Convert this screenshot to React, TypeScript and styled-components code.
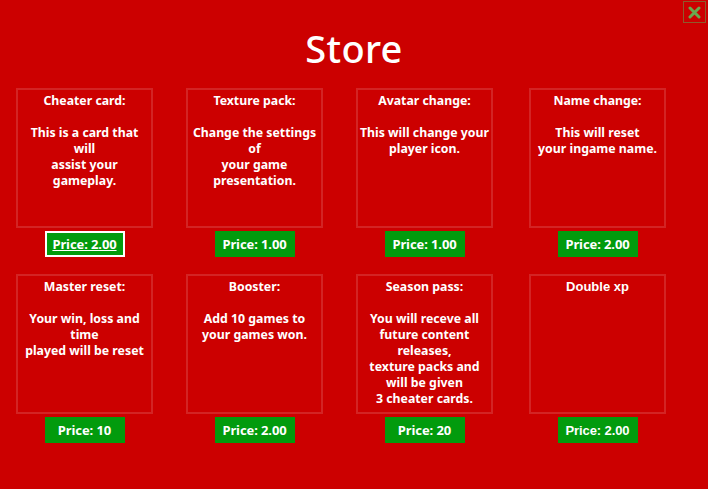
import React from "react";
import styled, { createGlobalStyle } from "styled-components";

type Item = {
  name: string;
  lines: string[];
  price: string;
  fallback?: boolean;
  active?: boolean;
};

const items: Item[] = [
  { name: "Cheater card:", lines: ["This is a card that", "will", "assist your", "gameplay."], price: "2.00", active: true },
  { name: "Texture pack:", lines: ["Change the settings", "of", "your game", "presentation."], price: "1.00" },
  { name: "Avatar change:", lines: ["This will change your", "player icon."], price: "1.00" },
  { name: "Name change:", lines: ["This will reset", "your ingame name."], price: "2.00" },
  { name: "Master reset:", lines: ["Your win, loss and", "time", "played will be reset"], price: "10" },
  { name: "Booster:", lines: ["Add 10 games to", "your games won."], price: "2.00" },
  {
    name: "Season pass:",
    lines: ["You will receve all", "future content", "releases,", "texture packs and", "will be given", "3 cheater cards."],
    price: "20",
  },
  { name: "Double xp", lines: [], price: "2.00", fallback: true },
];

const GlobalStyle = createGlobalStyle`
  html, body {
    margin: 0;
    background: #cc0000;
  }
  body {
    font-family: "Noto Sans", "DejaVu Sans", sans-serif;
  }
`;

const Page = styled.div`
  position: relative;
  width: 708px;
  height: 489px;
  background: #cc0000;
  color: #fff;
  overflow: hidden;
`;

const Title = styled.h1`
  margin: 0;
  padding-top: 26px;
  height: 63px;
  box-sizing: border-box;
  text-align: center;
  font-size: 38px;
  line-height: 44px;
  font-weight: 500;
  letter-spacing: 0.3px;
`;

const CloseButton = styled.button`
  position: absolute;
  top: 1px;
  right: 2px;
  width: 23px;
  height: 22px;
  padding: 0;
  border: 1px solid #8f5a2c;
  background: transparent;
  display: flex;
  align-items: center;
  justify-content: center;
  cursor: pointer;
`;

const Grid = styled.div`
  display: grid;
  grid-template-columns: 170px 170px 173px 137px;
  row-gap: 17px;
  padding: 25px 0 0 16px;
`;

const Slot = styled.div`
  display: flex;
  flex-direction: column;
  align-items: center;
  width: 137px;
`;

const Card = styled.div<{ $fallback?: boolean }>`
  box-sizing: border-box;
  width: 137px;
  height: 140px;
  border: 2px solid rgba(255, 255, 255, 0.14);
  padding-top: 3px;
  text-align: center;
  white-space: nowrap;
  font-family: ${({ $fallback }) =>
    $fallback ? `"Liberation Sans", Arial, sans-serif` : `"Noto Sans", "DejaVu Sans", sans-serif`};
  font-size: ${({ $fallback }) => ($fallback ? "13px" : "12.3px")};
  font-weight: 700;
  line-height: 16px;
`;

const Gap = styled.div`
  height: 16px;
`;

const PriceButton = styled.button<{ $active?: boolean; $fallback?: boolean }>`
  box-sizing: border-box;
  margin-top: 3px;
  width: 80px;
  height: 26px;
  padding: 0;
  background: #029b0d;
  color: #fff;
  border: ${({ $active }) => ($active ? "2px solid #fff" : "none")};
  font-family: ${({ $fallback }) =>
    $fallback ? `"Liberation Sans", Arial, sans-serif` : `"Noto Sans", "DejaVu Sans", sans-serif`};
  font-size: 13px;
  font-weight: 700;
  letter-spacing: -0.1px;
  text-decoration: ${({ $active }) => ($active ? "underline" : "none")};
  cursor: pointer;
`;

export default function App() {
  return (
    <Page>
      <GlobalStyle />
      <Title>Store</Title>
      <CloseButton aria-label="close">
        <svg width="13" height="13" viewBox="0 0 13 13">
          <path d="M2 2 L11 11 M11 2 L2 11" stroke="#6aa84f" strokeWidth="3" strokeLinecap="round" />
        </svg>
      </CloseButton>
      <Grid>
        {items.map((item) => (
          <Slot key={item.name}>
            <Card $fallback={item.fallback}>
              <div>{item.name}</div>
              {item.lines.length > 0 && <Gap />}
              {item.lines.map((line, i) => (
                <div key={i}>{line}</div>
              ))}
            </Card>
            <PriceButton $active={item.active} $fallback={item.fallback}>
              Price: {item.price}
            </PriceButton>
          </Slot>
        ))}
      </Grid>
    </Page>
  );
}
